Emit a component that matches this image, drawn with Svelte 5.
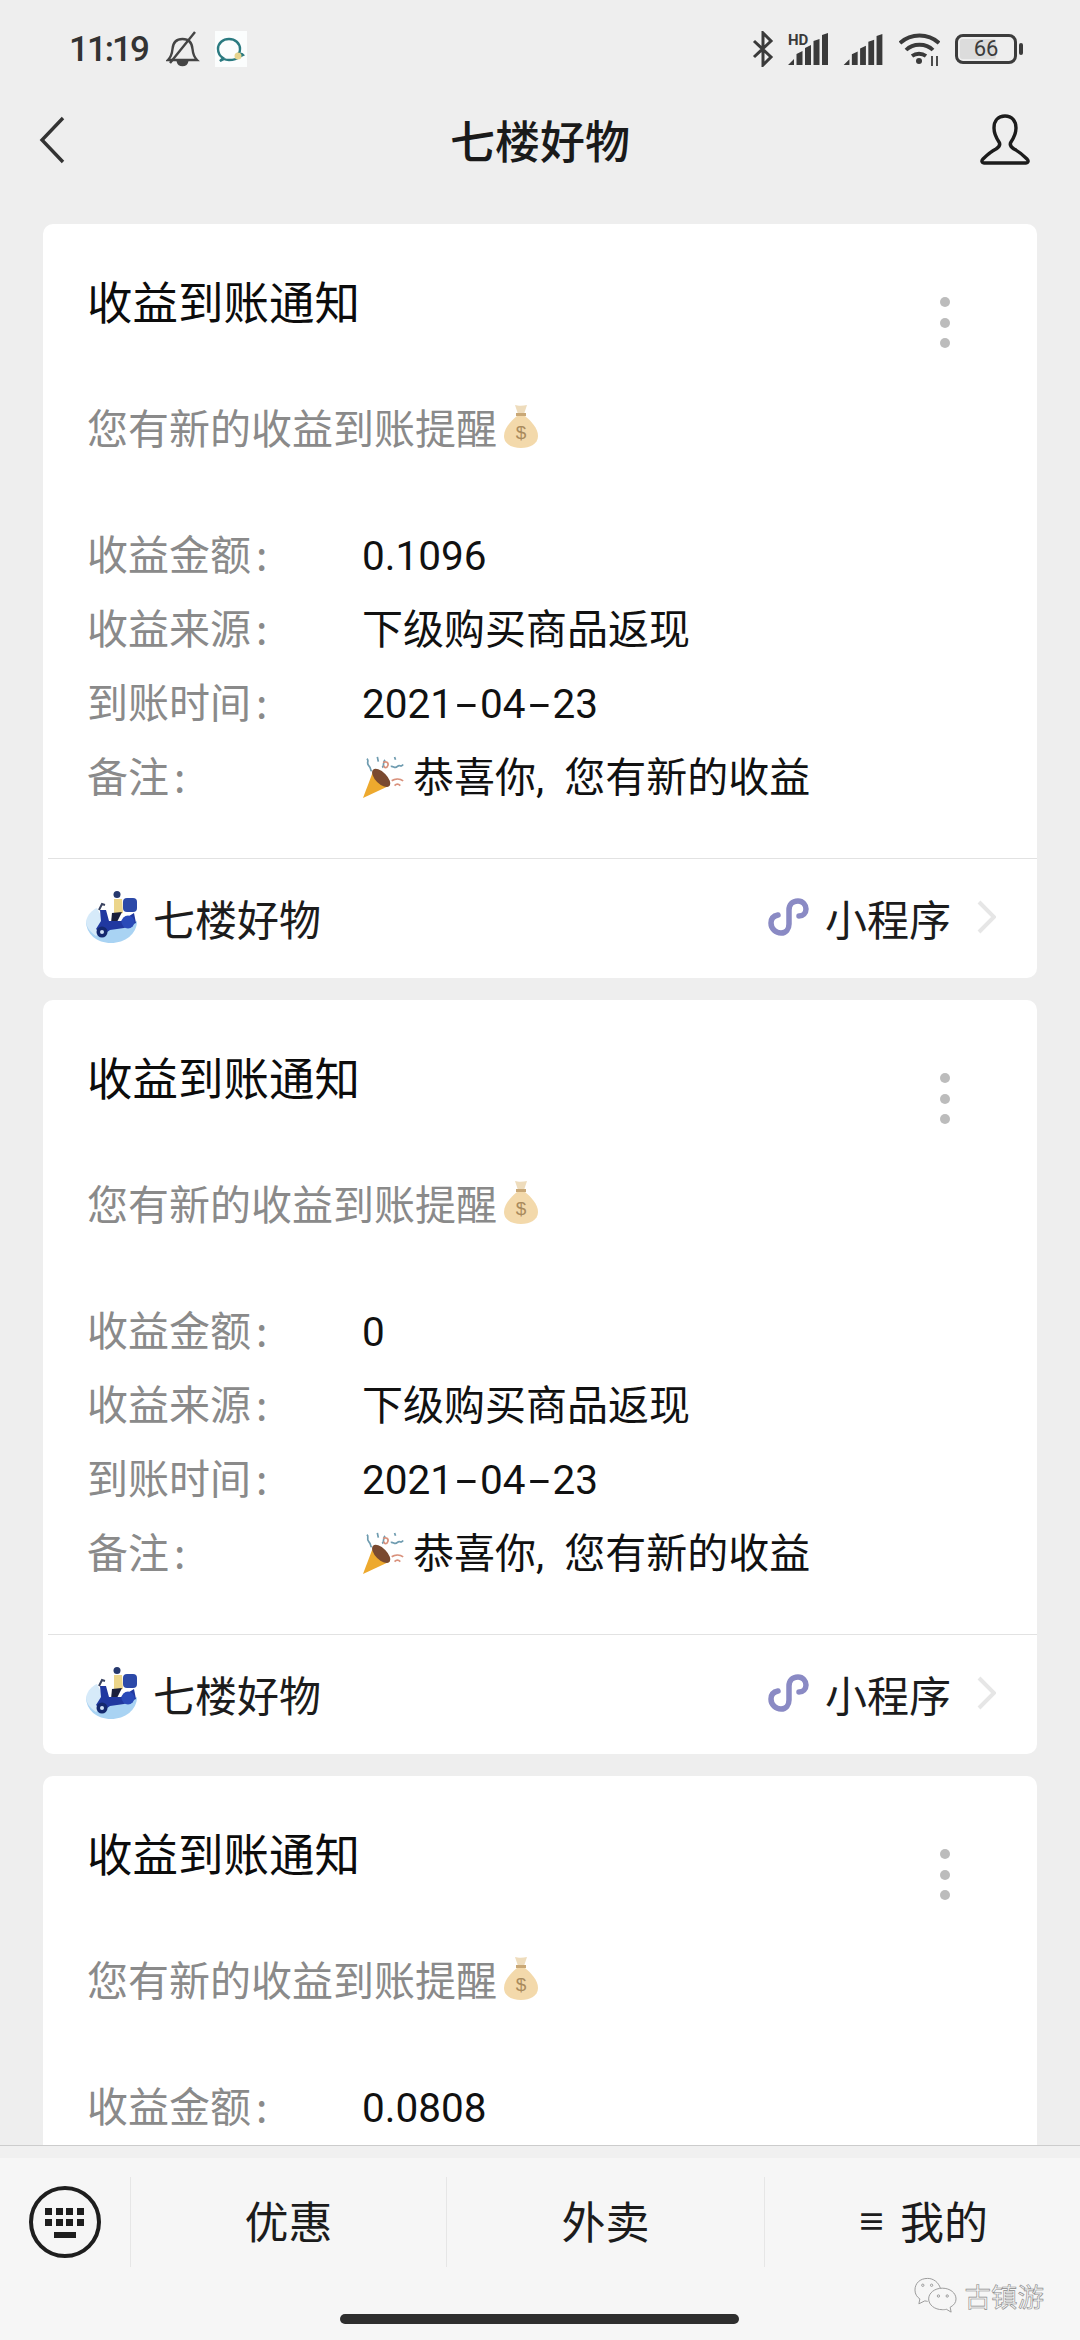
<script>
const cards = [
  { amount: '0.1096' },
  { amount: '0' },
  { amount: '0.0808' }
]
const bars = 'M0 32l6-6v6zM8.500 32V21l6-3v14zM17 32V15l6-3v20zM25.500 32V8l6-2v26zM34 32V2l6-2v32z'
</script>

<div class="page">
  <div class="status">
    <div class="status-left">
      <span class="time">11:19</span>
      <svg class="bell" width="34" height="36" viewBox="0 0 34 36" fill="none" stroke="#444" stroke-width="2.400">
        <path d="M2 29h29c-3-3-4-6-4.500-11-.5-6-3.500-10-10-10S7 12 6.500 18C6 23 5 26 2 29z"/>
        <path d="M12 31c1 4 8 4 9 0z" fill="#444"/>
        <path d="M4 32L29 1"/>
      </svg>
      <span class="app-badge">
        <svg width="32" height="36" viewBox="0 0 32 36" fill="none">
          <path d="M8 27c-3-2-5-5-5-9 0-6 5-10 11-10s11 4 11 10c0 2 0 3-1 4 1 1 3 1 4 2l-4 2c-2 2-6 3-10 3-2 0-3 0-5-1l-4 2z" stroke="#2a7a80" stroke-width="2.400"/>
          <circle cx="23" cy="25" r="3.500" fill="#e6d48e"/>
        </svg>
      </span>
    </div>
    <div class="status-right">
      <svg width="22" height="36" viewBox="0 0 22 36" fill="none" stroke="#3a3a3a" stroke-width="3">
        <path d="M2 10l17 16-8 8V2l8 8L2 26"/>
      </svg>
      <svg width="41" height="33" viewBox="0 0 41 33" fill="#3a3a3a">
        <text x="0" y="12" class="hd-text">HD</text>
        <path d={bars}/>
      </svg>
      <svg width="40" height="31" viewBox="0 0 40 32" fill="#3a3a3a">
        <path d={bars}/>
      </svg>
      <svg class="wifi" width="41" height="34" viewBox="0 0 41 34" fill="none" stroke="#3a3a3a" stroke-width="3.800">
        <path d="M1 11c11-10 28-10 39 0M7 18c7-7 20-7 27 0M13 24c4-3 10-3 14 0"/>
        <circle cx="20" cy="29" r="3" fill="#3a3a3a" stroke="none"/>
        <path d="M33 24v10M38 24v10" stroke-width="1.800"/>
      </svg>
      <div class="battery">
        <div class="battery-body"><span class="battery-fill"></span><span class="battery-num">66</span></div>
        <span class="battery-nub"></span>
      </div>
    </div>
  </div>

  <div class="nav">
    <svg class="back" width="26" height="48" viewBox="0 0 26 48" fill="none" stroke="#333" stroke-width="3.400">
      <path d="M24 2L3 24l21 22"/>
    </svg>
    <span class="nav-title">七楼好物</span>
    <svg class="person" width="52" height="52" viewBox="0 0 52 52" fill="none" stroke="#1c1c1c" stroke-width="3.400" stroke-linejoin="round">
      <path d="M26 2c-7 0-11 5-11 12 0 6 3 11 5 14 2 3 0 5-3 7-4 2-9 6-13 10-2 2-1 4 1 4h42c2 0 3-2 1-4-4-4-9-8-13-10-3-2-5-4-3-7 2-3 5-8 5-14 0-7-4-12-11-12z"/>
    </svg>
  </div>

  <div class="list">
    {#each cards as card}
      <div class="card">
        <div class="card-head">
          <div class="card-title">收益到账通知</div>
          <div class="dots"><i></i><i></i><i></i></div>
        </div>
        <div class="card-sub">
          您有新的收益到账提醒
          <svg class="bag" width="36" height="46" viewBox="0 0 36 46">
            <path d="M12 2c3 1 8 1 12 0l-3 9h-6z" fill="#eedcbc"/>
            <path d="M14 13C8 18 1 25 1 33c0 8 8 12 17 12s17-4 17-12c0-8-7-15-13-20z" fill="#f3d9ab"/>
            <rect x="13" y="10" width="10" height="3" fill="#c9a877"/>
            <text x="18" y="36" class="bag-text">$</text>
          </svg>
        </div>
        <div class="rows">
          <div class="row"><span class="label">收益金额<span class="colon">:</span></span><span class="value num">{card.amount}</span></div>
          <div class="row"><span class="label">收益来源<span class="colon">:</span></span><span class="value">下级购买商品返现</span></div>
          <div class="row"><span class="label">到账时间<span class="colon">:</span></span><span class="value num">2021<span class="dash">-</span>04<span class="dash">-</span>23</span></div>
          <div class="row">
            <span class="label">备注<span class="colon">:</span></span>
            <span class="value note">
              <svg class="popper" width="46" height="44" viewBox="0 0 48 46" fill="none">
                <path d="M1 45l11-29 17 16z" fill="#eda92e"/>
                <ellipse cx="20" cy="24" rx="6" ry="12" transform="rotate(-45 20 24)" fill="#7a4a30"/>
                <path d="M5 4c3 2-1 4 2 7s1 4 3 6M16 2l1 5M24 5c-3 3 0 6-3 8M30 12c3-1 4 3 7 0s3 2 6-2M34 2l1 3" stroke="#6f9cb0" stroke-width="1.800"/>
                <path d="M22 8c3-2 6 0 5 3s-4 3-4 0M31 27c3-2 8-3 12 0M34 32c2-2 4-2 6 0" stroke="#d9917c" stroke-width="1.800"/>
              </svg>恭喜你, 您有新的收益
            </span>
          </div>
        </div>
        <div class="foot">
          <div class="foot-left">
            <svg class="avatar" width="54" height="52" viewBox="0 0 54 52">
              <path d="M1 30c0 13 11 22 25 22s26-9 26-22c-10 7-34 9-51 0z" fill="#a9d3f3"/>
              <path d="M1 30c2-7 6-11 11-13l10 19-11 9C5 41 1 36 1 30z" fill="#d6eaf9"/>
              <rect x="38" y="7" width="14" height="14" rx="4" fill="#2c49a8"/>
              <path d="M29 8h8l1 14-9 2z" fill="#ecd58a"/>
              <circle cx="32" cy="3.500" r="3.500" fill="#26386e"/>
              <path d="M27 22l10-1-5 10-6 1z" fill="#1a1f3c"/>
              <path d="M15 19l6 0 3 11 12 0 13-8 2 10-12 5-14 2-7 5-7-6 5-8z" fill="#2038a0"/>
              <path d="M14 19l3-6 3 1" fill="none" stroke="#39425f" stroke-width="2"/>
              <circle cx="17" cy="41" r="5.500" fill="#14286e"/>
              <circle cx="17" cy="41" r="2" fill="#cfe0f5"/>
              <circle cx="43" cy="31" r="6.500" fill="#2a4ab8"/>
            </svg>
            <span>七楼好物</span>
          </div>
          <div class="foot-right">
            <svg class="link" width="41" height="38" viewBox="0 0 41 38" fill="none" stroke="#8a8ac4" stroke-width="5.500" stroke-linecap="round">
              <path d="M10 17C5 18 3 21 3 25c0 6 5 10 10 10s8-4 8-9V12c0-5 3-9 9-9 5 0 8 4 8 8s-3 7-7 7"/>
            </svg>
            <span>小程序</span>
            <svg class="chev" width="19" height="34" viewBox="0 0 19 34" fill="none" stroke="#e6e6e6" stroke-width="4">
              <path d="M2 2l15 15L2 32"/>
            </svg>
          </div>
        </div>
      </div>
    {/each}
  </div>

  <div class="tabs">
    <div class="tab-row">
      <div class="tab key">
        <svg width="74" height="74" viewBox="0 0 74 74" fill="#1e1e1e">
          <circle cx="37" cy="37" r="34" fill="none" stroke="#1e1e1e" stroke-width="4"/>
          {#each [17, 28, 38, 49] as x}
            <rect x={x} y="23" width="7" height="7"/>
            <rect x={x} y="34" width="7" height="7"/>
          {/each}
          <rect x="26" y="47" width="22" height="6"/>
        </svg>
      </div>
      <div class="tab">优惠</div>
      <div class="tab">外卖</div>
      <div class="tab"><span class="menu-mark">≡</span>我的</div>
    </div>
    <div class="home"></div>
    <div class="mark">
      <svg width="43" height="38" viewBox="0 0 44 38" fill="none" stroke="#9a9a9a" stroke-width="1">
        <path d="M14 1C6 1 1 6 1 13c0 4 2 7 5 9l-1 5 6-3c1 0 2 .5 3 .5M27 11c-2-6-7-10-13-10"/>
        <path d="M29 11c-8 0-14 5-14 11s6 11 14 11c2 0 3 0 4-.5l5 3-1-5c4-2 6-5 6-8.500 0-6-6-11-14-11z" fill="#f6f6f6"/>
        <circle cx="9" cy="8" r="1.200"/><circle cx="18" cy="8" r="1.200"/>
        <circle cx="25" cy="19" r="1.200"/><circle cx="34" cy="19" r="1.200"/>
      </svg>
      <span>古镇游</span>
    </div>
  </div>
</div>

<style>
:global(body) {
  margin: 0;
  background: #eeeeee;
}

.page {
  position: relative;
  display: flex;
  flex-direction: column;
  width: 1080px;
  height: 2340px;
  overflow: hidden;
  background: #eeeeee;
  font-family: "Noto Sans CJK SC", "Noto Sans", sans-serif;
  color: #111;
}

.status {
  display: flex;
  align-items: center;
  justify-content: space-between;
  box-sizing: border-box;
  height: 100px;
  padding: 0 57px 2px 69px;
  flex: none;
}
.status-left, .status-right {
  display: flex;
  align-items: center;
}
.status-right { gap: 14px; }
.time {
  font-family: Roboto, sans-serif;
  font-size: 35px;
  font-weight: 500;
  letter-spacing: -2px;
  color: #333;
}
.bell { margin-left: 18px; }
.app-badge {
  display: flex;
  margin-left: 15px;
  background: #fbfdfd;
}
.wifi { margin: 0 1px 0 2px; }
.hd-text {
  font-family: Roboto, sans-serif;
  font-size: 15px;
  font-weight: 700;
}
.battery {
  display: flex;
  align-items: center;
}
.battery-body {
  position: relative;
  display: flex;
  align-items: center;
  justify-content: center;
  box-sizing: border-box;
  width: 62px;
  height: 30px;
  border: 3.500px solid #3c3c3c;
  border-radius: 8px;
}
.battery-fill {
  position: absolute;
  left: 2px;
  top: 2px;
  bottom: 2px;
  width: 36px;
  background: #dcdcdc;
  border-radius: 2px;
}
.battery-num {
  position: relative;
  font-family: Roboto, sans-serif;
  font-size: 22px;
  line-height: 22px;
  color: #3c3c3c;
}
.battery-nub {
  width: 4px;
  height: 12px;
  margin-left: 2px;
  background: #3c3c3c;
  border-radius: 2px;
}

.nav {
  display: grid;
  grid-template-columns: 1fr auto 1fr;
  align-items: center;
  box-sizing: border-box;
  height: 84px;
  padding: 0 49px 4px 49px;
  flex: none;
}
.back { margin-left: -10px; }
.person { justify-self: end; }
.nav-title {
  font-size: 45px;
  font-weight: 500;
  color: #1a1a1a;
  line-height: 60px;
}

.list {
  display: flex;
  flex-direction: column;
  gap: 22px;
  padding: 40px 43px 0 43px;
  flex: 1;
  min-height: 0;
  overflow: hidden;
}
.card {
  flex: none;
  display: flex;
  flex-direction: column;
  height: 754px;
  background: #fff;
  border-radius: 10px;
}
.card-head {
  display: flex;
  align-items: flex-start;
  justify-content: space-between;
  box-sizing: border-box;
  height: 109px;
  padding: 44px 87px 0 44px;
}
.card-title {
  font-size: 45.500px;
  line-height: 65px;
  color: #0c0c0c;
}
.dots {
  display: flex;
  flex-direction: column;
  gap: 10.500px;
  margin-top: 29px;
}
.dots i {
  display: block;
  flex: none;
  width: 10px;
  height: 10px;
  border-radius: 50%;
  background: #bcbcbc;
}
.card-sub {
  display: flex;
  align-items: center;
  box-sizing: border-box;
  height: 60px;
  margin-top: 62.700px;
  padding-left: 44px;
  font-size: 41px;
  color: #8a8a8a;
}
.bag { margin-left: 6px; }
.bag-text {
  font-family: "Liberation Sans", sans-serif;
  font-size: 19px;
  text-anchor: middle;
  fill: #a98a5c;
}
.rows {
  margin-top: 59.500px;
  padding-left: 44px;
}
.row {
  display: flex;
  align-items: baseline;
  height: 74px;
  line-height: 74px;
  font-size: 41px;
}
.label {
  width: 275px;
  color: #8a8a8a;
}
.colon { margin-left: 5px; }
.value {
  font-family: Roboto, "Noto Sans CJK SC", sans-serif;
  color: #111;
}
.num { font-size: 40.500px; }
.dash {
  display: inline-block;
  width: 27px;
  text-align: center;
  transform: scaleX(1.900);
}
.note { word-spacing: 10px; }
.popper {
  margin-right: 5px;
  vertical-align: -7px;
}
.foot {
  display: flex;
  align-items: center;
  justify-content: space-between;
  box-sizing: border-box;
  height: 120px;
  margin-top: auto;
  margin-left: 5px;
  padding: 0 41px 3px 37px;
  border-top: 1.500px solid #e2e2e2;
  font-size: 42px;
  color: #1c1c1c;
}
.foot-left, .foot-right {
  display: flex;
  align-items: center;
}
.avatar { margin-right: 14px; }
.link { margin-right: 16px; }
.chev { margin-left: 26px; }

.tabs {
  position: relative;
  flex: none;
  box-sizing: border-box;
  height: 195px;
  padding-top: 31px;
  background: linear-gradient(#f0f0f0 0 12px, #f6f6f6 12px);
  border-top: 1.500px solid #cccccc;
}
.tab-row {
  display: grid;
  grid-template-columns: 130px 316px 318px 316px;
  height: 90px;
}
.tab {
  display: flex;
  align-items: center;
  justify-content: center;
  padding-bottom: 5px;
  border-left: 1.500px solid #e6e6e6;
  font-size: 44px;
  color: #1c1c1c;
}
.key {
  border-left: none;
  justify-content: flex-start;
  padding: 0 0 0 28px;
}
.menu-mark {
  margin-right: 14px;
  font-size: 29px;
  font-weight: 700;
}
.home {
  width: 399px;
  height: 10px;
  margin: 47px 0 0 340px;
  border-radius: 5px;
  background: #2e2e2e;
}
.mark {
  position: absolute;
  right: 36px;
  top: 130px;
  display: flex;
  align-items: center;
  gap: 8px;
  font-size: 26.500px;
  color: #f6f6f6;
  -webkit-text-stroke: 0.600px #8a8a8a;
}
</style>
